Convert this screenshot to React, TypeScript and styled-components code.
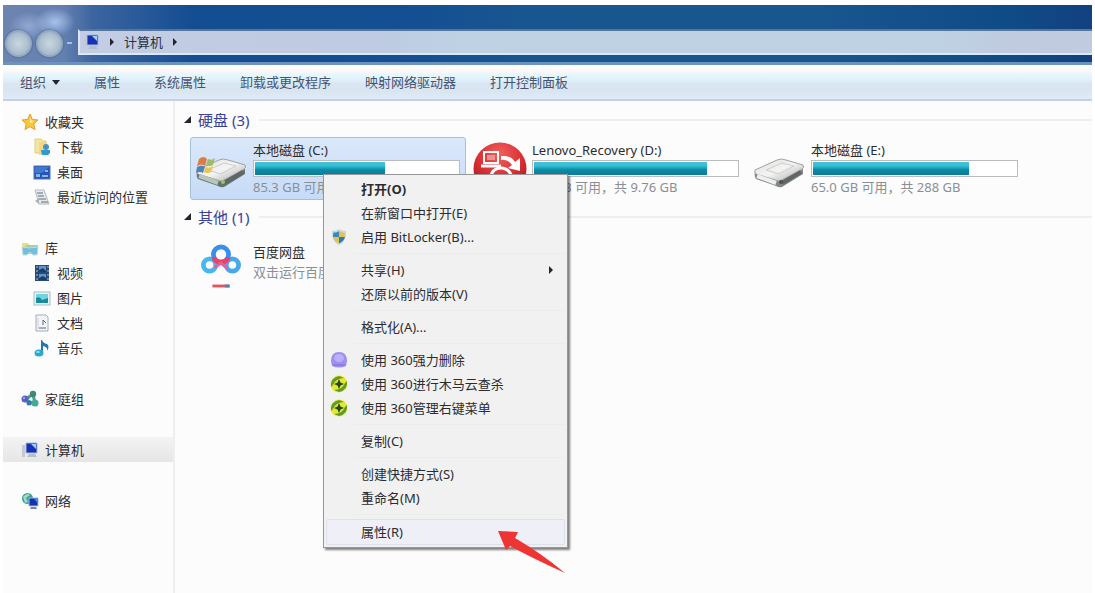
import React from "react";
import styled, { createGlobalStyle } from "styled-components";

const Global = createGlobalStyle`
  * { box-sizing: border-box; }
  body {
    margin: 0;
    background: #fff;
    color: #2c2c30;
    font: 13px/20px "Noto Sans", "Noto Sans CJK SC", sans-serif;
  }
  button, input { font: inherit; color: inherit; }
  ul, h2, p { margin: 0; padding: 0; list-style: none; font: inherit; }
`;

const Window = styled.div`
  position: relative;
  display: flex;
  flex-direction: column;
  min-height: 100vh;
  padding: 5px 3px 0;
  overflow: hidden;
`;

const TitleBar = styled.header`
  display: flex;
  align-items: flex-end;
  height: 60px;
  padding-bottom: 7px;
  border-bottom: 3px solid #6d92bd;
  background:
    radial-gradient(ellipse 20px 14px at 52px 17px, rgba(190, 215, 255, 0.75), transparent),
    radial-gradient(ellipse 20px 14px at 26px 21px, rgba(180, 200, 240, 0.55), transparent),
    linear-gradient(90deg, #6e84b0 0, #6480b0 60px, #3c65a0 90px, rgba(24, 79, 144, 0) 190px),
    linear-gradient(90deg, #134c90 0, #134f92 400px, #18568f 520px, #18568e 75%, #0f4c86 92%, #12417f);
`;

const NavButtons = styled.div`
  display: flex;
  align-items: center;
  width: 75px;
  height: 24px;
  padding-left: 2px;
  gap: 4px;
`;

const RoundButton = styled.button`
  width: 27px;
  height: 27px;
  padding: 0;
  border: 2px solid #93a9bf;
  border-radius: 50%;
  background: radial-gradient(circle at 50% 50%, #c9d8de 0, #aec0d0 55%, #8ea6c2 100%);
  box-shadow: 0 0 2px #35507c;
`;

const HistoryMark = styled.span`
  width: 5px;
  height: 2px;
  background: #a9bfdf;
`;

const AddressBar = styled.nav`
  display: flex;
  flex: 1;
  align-items: center;
  height: 26px;
  padding-left: 2px;
  gap: 8px;
  border-top: 2px solid #587699;
  border-bottom: 2px solid #dbe8f5;
  border-left: 2px solid #dbe4f0;
  background: linear-gradient(90deg, #c3cde3 0, #bfcbe2 300px, #bed2e4 380px, #bed2e3 85%, #c0cbe0 92%);
`;

const Crumb = styled.a`
  color: #2b3444;
  text-decoration: none;
`;

const Toolbar = styled.div`
  display: flex;
  height: 36px;
  padding: 0 17px;
  gap: 34px;
  border-bottom: 2px solid #c3d1e1;
  background: linear-gradient(#fff 0, #fdf7f8 6px, #e4f6fe 10px, #e1f2fc 14px, #d9e6f1 19px, #d9e6f1 26px, #dfebf7);
`;

const ToolButton = styled.button`
  display: flex;
  align-items: center;
  padding: 0;
  gap: 6px;
  border: 0;
  background: none;
  color: #46536f;
`;

const Panes = styled.div`
  display: flex;
  flex: 1;
  background: #fcfcfd;
`;

const Sidebar = styled.nav`
  display: flex;
  flex-direction: column;
  flex: none;
  width: 172px;
  padding-top: 8px;
  gap: 26px;
  border-right: 2px solid #eeeef1;
`;

const SideLink = styled.a<{ $nested?: boolean; $selected?: boolean }>`
  display: flex;
  align-items: center;
  height: 25px;
  padding-left: ${(p) => (p.$nested ? 30 : 18)}px;
  gap: 6px;
  color: inherit;
  text-decoration: none;
  background: ${(p) => (p.$selected ? "linear-gradient(#f3f3f3, #e6e6e7)" : "none")};
`;

const Content = styled.main`
  flex: 1;
  min-width: 0;
  padding: 6px 0 0 9px;
`;

const Section = styled.section`
  margin-bottom: 4px;
`;

const SectionTitle = styled.h2`
  display: flex;
  align-items: center;
  height: 26px;
  margin-bottom: 4px;
  gap: 6px;
  font-size: 15px;
  color: #38429a;

  &::after {
    content: "";
    flex: 1;
    height: 2px;
    margin-left: 4px;
    background: #efeff2;
  }
`;

const Tiles = styled.div`
  display: grid;
  grid-template-columns: repeat(auto-fill, 276px);
  gap: 3px;
  padding-left: 6px;
`;

const Tile = styled.div<{ $selected?: boolean }>`
  display: grid;
  grid-template-columns: 50px 1fr;
  align-items: center;
  height: 63px;
  padding: 0 5px;
  column-gap: 7px;
  border: 1px solid ${(p) => (p.$selected ? "#a5bfdf" : "transparent")};
  border-radius: 3px;
  background: ${(p) => (p.$selected ? "linear-gradient(#dbe8fb, #c6dbf7)" : "none")};
`;

const TileIcon = styled.span`
  display: flex;
  justify-content: center;

  svg { flex: none; }
`;

const TileText = styled.div<{ $raised?: boolean }>`
  min-width: 0;
  padding-bottom: ${(p) => (p.$raised ? 8 : 0)}px;
  white-space: nowrap;
`;

const Muted = styled.p`
  color: #8a8f96;
`;

const Meter = styled.div`
  height: 17px;
  padding: 1px;
  border: 1px solid #bcbcc0;
  background: #fff;
`;

const MeterFill = styled.div`
  height: 100%;
  background: linear-gradient(#45c3d8 0, #35bdd3 30%, #0a8aa6 60%, #0d7b99 100%);
`;

const Menu = styled.div`
  position: absolute;
  left: 323px;
  top: 174px;
  width: 245px;
  padding: 2px;
  border: 1px solid #979797;
  background: #f1f1f1;
  box-shadow: 2px 2px 2px rgba(0, 0, 0, 0.5);
`;

const MenuItem = styled.button<{ $default?: boolean; $hot?: boolean }>`
  display: flex;
  align-items: center;
  width: 100%;
  height: ${(p) => (p.$hot ? 26 : 24)}px;
  padding: 0 9px 0 3px;
  border: 1px solid ${(p) => (p.$hot ? "#dde1ec" : "transparent")};
  border-radius: 2px;
  background: ${(p) => (p.$hot ? "#eff0f7" : "none")};
  font-weight: ${(p) => (p.$default ? 700 : 400)};
  white-space: nowrap;
`;

const MenuIcon = styled.span`
  display: flex;
  flex: none;
  width: 31px;
`;

const MenuLabel = styled.span`
  flex: 1;
  text-align: left;
`;

const Separator = styled.hr`
  height: 1px;
  margin: 4px 0 4px 28px;
  border: 0;
  background: #ececee;
`;

const Pointer = styled.svg`
  position: absolute;
  left: 496px;
  top: 528px;
`;

const Svg = ({ children }: { children: React.ReactNode }) => (
  <svg width="18" height="18" viewBox="0 0 18 18" aria-hidden="true">
    {children}
  </svg>
);

const Triangle = ({ kind }: { kind: "right" | "down" | "open" }) => (
  <svg width="8" height="8" viewBox="0 0 8 8" aria-hidden="true">
    <path
      fill="#22252d"
      d={kind === "right" ? "M2 0 6 4 2 8Z" : kind === "down" ? "M0 2H8L4 7Z" : "M7 0V7H0Z"}
    />
  </svg>
);

const Star = () => (
  <Svg>
    <path d="M9 1 11.3 6.4 17 7 12.8 10.8 14 16.6 9 13.7 4 16.6 5.2 10.8 1 7 6.7 6.4Z" fill="#f8c83c" stroke="#e89a35" />
    <path d="M9 3.5 10.3 7.6 13 8 9 10Z" fill="#fff0a0" />
  </Svg>
);
const Downloads = () => (
  <Svg>
    <path d="M2 1H8L10 3H13V15H2Z" fill="#f5e4a0" stroke="#dfcc83" />
    <path d="M6 4H14V16L6 17Z" fill="#efd88a" />
    <circle cx="13" cy="9" r="3" fill="#4b91be" />
    <path d="M8 12H17V15L15 17H9Z" fill="#2d9ad0" />
  </Svg>
);
const Desktop = () => (
  <Svg>
    <rect x="1" y="3" width="16" height="13" fill="#2455b4" stroke="#5075b5" />
    <path d="M2 4H16L9 10H2Z" fill="#3e78d2" />
    <path d="M3 11H7V14H3ZM12 7H15V9H12ZM9 12H15V14H9Z" fill="#87b6e6" />
  </Svg>
);
const Recent = () => (
  <Svg>
    <path d="M2 2H11L16 16H6Z" fill="#e7eaec" stroke="#b3babf" />
    <path d="M4 5H10M5 8H11M6 11H13M8 14H15" stroke="#8b989e" strokeWidth="1.3" />
    <path d="M2 13 6 10V16Z" fill="#aab3ba" />
  </Svg>
);
const Library = () => (
  <Svg>
    <path d="M1 4H7L9 6H16V14H1Z" fill="#eadf8c" />
    <path d="M4 6H17V15H6Z" fill="#9dd6a2" />
    <path d="M1 8Q8 10 17 8L16 16H12Q9 11 6 16H2Z" fill="#74bddc" stroke="#bcdce8" />
  </Svg>
);
const Video = () => (
  <Svg>
    <rect x="2" y="1" width="14" height="16" fill="#274b78" />
    <path d="M6 2H13V8H6ZM6 10H13V16H6Z" fill="#6795c2" />
    <path d="M4 2V17M15 2V17" stroke="#aac1d9" strokeDasharray="2 2" />
    <path d="M6 6 10 4 13 7V8H6ZM6 14 10 12 13 14V16H6Z" fill="#1f3c63" />
  </Svg>
);
const Picture = () => (
  <Svg>
    <rect x="1" y="3" width="16" height="13" fill="#e7f3f7" stroke="#a3bdca" />
    <rect x="3" y="5" width="12" height="9" fill="#6fd5df" />
    <path d="M3 9Q7 7 9 11L15 9V14H3Z" fill="#168b9b" />
  </Svg>
);
const DocumentIcon = () => (
  <Svg>
    <path d="M3 1H13L15 3V17H3Z" fill="#f2f4fa" stroke="#a5abb6" />
    <path d="M10 6V11M10 6 13 9M6 14H13" stroke="#58687c" fill="none" />
    <path d="M5 4V15" stroke="#cbd0dc" />
  </Svg>
);
const Music = () => (
  <Svg>
    <path d="M9 1Q10 4 14 5Q17 7 14 12Q15 8 10 7V14H8V1Z" fill="#2677ae" />
    <ellipse cx="6" cy="14" rx="4.5" ry="3.5" fill="#2ca9ce" />
    <ellipse cx="5" cy="13" rx="2" ry="1" fill="#8ee4ee" />
  </Svg>
);
const Homegroup = () => (
  <Svg>
    <path d="M4 10 12 4 14 14Z" fill="none" stroke="#4c9b91" strokeWidth="3" />
    <circle cx="4" cy="9" r="3.5" fill="#5a60c8" />
    <circle cx="12" cy="4" r="3.2" fill="#3c8b75" />
    <circle cx="14" cy="13" r="3.5" fill="#47a997" />
    <circle cx="8" cy="13" r="2.5" fill="#2e7baf" />
    <circle cx="3" cy="8" r="1" fill="#c4b7f6" />
  </Svg>
);
const Computer = () => (
  <Svg>
    <path d="M1 4H4V16H1Z" fill="#c3cad3" />
    <path d="M5 2H16V12H5Z" fill="#1730b4" stroke="#a2b8dc" />
    <path d="M10 3H15V8Z" fill="#a2cdf5" />
    <path d="M8 13H14L16 16H6Z" fill="#b5bfca" />
  </Svg>
);
const Network = () => (
  <Svg>
    <circle cx="6.5" cy="6.5" r="5.5" fill="#3b9e95" />
    <path d="M2 5Q6 0 9 3L5 6L7 10L4 11Z" fill="#9edbc2" />
    <path d="M8 6H17V14H8Z" fill="#1533aa" stroke="#9ebce8" />
    <path d="M13 6.5H16.5V11Z" fill="#468ee2" />
    <path d="M10 15H15L16 17H9Z" fill="#7985a0" />
  </Svg>
);
const Shield = () => (
  <Svg>
    <path d="M9 1Q12 3 16 3Q17 13 9 17Q1 13 2 3Q6 3 9 1Z" fill="#c6d8e2" />
    <path d="M9 3V9H3Q3 6 3.5 4.5Q7 5 9 3Z" fill="#3a89bc" />
    <path d="M9 3Q11 5 14.5 4.5Q15 7 14.7 9H9ZM3 9H9V15.5Q4 13 3 9Z" fill="#e3c153" />
    <path d="M9 9H15Q14 13 9 15.5Z" fill="#3479ae" />
  </Svg>
);
const Purple = () => (
  <Svg>
    <path d="M1 10Q1 1 9 1T17 10L16 15Q9 18 2 15Z" fill="#9e8ff0" />
    <ellipse cx="9" cy="7" rx="5" ry="4" fill="#bbb0f8" />
    <path d="M3 14H15" stroke="#7d70d4" />
  </Svg>
);
const Safe360 = () => (
  <Svg>
    <circle cx="9" cy="9" r="8.5" fill="#e5e832" />
    <path d="M1 12Q0 3 9 1L14 3Q6 3 3 10ZM17 6Q18 15 9 17L4 15Q12 15 15 8Z" fill="#5f9a2a" />
    <path d="M9 4 10.5 7.5 14 9 10.5 10.5 9 14 7.5 10.5 4 9 7.5 7.5Z" fill="#26491c" />
  </Svg>
);

const DriveIcon = ({ system }: { system?: boolean }) => (
  <svg width="50" height="40" viewBox="0 -6 50 40" aria-hidden="true">
    <defs>
      <linearGradient id="metal" x1="0" y1="0" x2="1" y2="1">
        <stop offset="0" stopColor="#dcdddc" />
        <stop offset="0.5" stopColor="#f4f4f3" />
        <stop offset="1" stopColor="#a5a7a6" />
      </linearGradient>
    </defs>
    <path d="M1 17 27 25 49 14V19L28 32Q25 33 22 31L2 24Q0 22 1 17Z" fill={system ? "#62766e" : "#858787"} />
    <path d="M1 15 23 5Q27 3 32 5L49 10Q51 12 48 14L28 25Q25 27 21 25L2 19Q0 17 1 15Z" fill="url(#metal)" stroke="#a0a3a2" />
    <path d="M3 21 22 28" stroke={system ? "#b9c6be" : "#eef0ef"} strokeWidth="4" />
    <path d="M28 28 47 17" stroke="#606664" strokeWidth="4" />
    <path d="M12 15 28 8 40 11 25 19Z" fill="none" stroke="#cccecd" />
    <circle cx="27" cy="27" r="2" fill={system ? "#9bc45e" : "#505252"} />
    {system && (
      <>
        <path d="M3 4Q8 0 11 4L9 11Q6 8 1 11Z" fill="#db7c43" />
        <path d="M12 4Q16 6 19 3L17 10Q13 12 10 10Z" fill="#a0b96c" />
        <path d="M1 12Q6 9 9 12L7 18Q4 16 0 18Z" fill="#5582b5" />
        <path d="M10 12Q13 14 17 11L15 17Q11 19 8 17Z" fill="#e8c54b" />
      </>
    )}
  </svg>
);
const RecoveryIcon = () => (
  <svg width="54" height="54" viewBox="0 0 54 54" aria-hidden="true">
    <defs>
      <radialGradient id="redBall" cx="50%" cy="22%" r="75%">
        <stop offset="0" stopColor="#f0605a" />
        <stop offset="0.6" stopColor="#d92b32" />
        <stop offset="1" stopColor="#981b26" />
      </radialGradient>
    </defs>
    <circle cx="27" cy="27" r="26.5" fill="url(#redBall)" />
    <rect x="11" y="10" width="14" height="11" fill="none" stroke="#fff" strokeWidth="2" />
    <rect x="14" y="13" width="8" height="5" fill="#ee9191" />
    <path d="M8 24H28" stroke="#fff" strokeWidth="3" />
    <path d="M28 14Q38 13 42 20L47 16V29L35 26L39 23Q35 17 28 18Z" fill="#fff" />
    <path d="M16 40Q18 26 28 26T40 40" fill="none" stroke="#fff" strokeWidth="3" />
    <circle cx="28" cy="36" r="4" fill="#fff" />
  </svg>
);
const NetdiskIcon = () => (
  <svg width="40" height="46" viewBox="0 0 42 46" aria-hidden="true">
    <g fill="none" strokeWidth="5">
      <circle cx="9" cy="22" r="6.5" stroke="#45b8ed" />
      <circle cx="33" cy="22" r="6.5" stroke="#45a9ec" />
      <circle cx="21" cy="11" r="8" stroke="#398fe9" />
      <path d="M13.5 14Q15 19 21 19T28.5 14" stroke="#ed416b" />
      <path d="M14 25 21 20 28 26" stroke="#e95f93" strokeWidth="3" />
    </g>
    <path d="M12 44H30" stroke="#e4565c" strokeWidth="3" />
    <path d="M25 44H30" stroke="#4e82b8" strokeWidth="3" />
  </svg>
);

const toolbar = ["组织", "属性", "系统属性", "卸载或更改程序", "映射网络驱动器", "打开控制面板"];

const sideGroups = [
  [
    { label: "收藏夹", Icon: Star },
    { label: "下载", Icon: Downloads, nested: true },
    { label: "桌面", Icon: Desktop, nested: true },
    { label: "最近访问的位置", Icon: Recent, nested: true },
  ],
  [
    { label: "库", Icon: Library },
    { label: "视频", Icon: Video, nested: true },
    { label: "图片", Icon: Picture, nested: true },
    { label: "文档", Icon: DocumentIcon, nested: true },
    { label: "音乐", Icon: Music, nested: true },
  ],
  [{ label: "家庭组", Icon: Homegroup }],
  [{ label: "计算机", Icon: Computer, selected: true }],
  [{ label: "网络", Icon: Network }],
] as { label: string; Icon: React.FC; nested?: boolean; selected?: boolean }[][];

const drives = [
  { name: "本地磁盘 (C:)", used: 64, info: "85.3 GB 可用", icon: <DriveIcon system />, selected: true },
  { name: "Lenovo_Recovery (D:)", used: 85, info: "1.4 GB 可用，共 9.76 GB", icon: <RecoveryIcon /> },
  { name: "本地磁盘 (E:)", used: 77, info: "65.0 GB 可用，共 288 GB", icon: <DriveIcon /> },
];

type Entry = { label: string; icon?: React.ReactNode; bold?: boolean; sub?: boolean; hot?: boolean };
const menuGroups: Entry[][] = [
  [{ label: "打开(O)", bold: true }, { label: "在新窗口中打开(E)" }, { label: "启用 BitLocker(B)...", icon: <Shield /> }],
  [{ label: "共享(H)", sub: true }, { label: "还原以前的版本(V)" }],
  [{ label: "格式化(A)..." }],
  [
    { label: "使用 360强力删除", icon: <Purple /> },
    { label: "使用 360进行木马云查杀", icon: <Safe360 /> },
    { label: "使用 360管理右键菜单", icon: <Safe360 /> },
  ],
  [{ label: "复制(C)" }],
  [{ label: "创建快捷方式(S)" }, { label: "重命名(M)" }],
  [{ label: "属性(R)", hot: true }],
];

export default function App() {
  return (
    <Window>
      <Global />
      <TitleBar>
        <NavButtons>
          <RoundButton aria-label="后退" />
          <RoundButton aria-label="前进" />
          <HistoryMark />
        </NavButtons>
        <AddressBar aria-label="地址">
          <Computer />
          <Triangle kind="right" />
          <Crumb href="#computer">计算机</Crumb>
          <Triangle kind="right" />
        </AddressBar>
      </TitleBar>
      <Toolbar>
        {toolbar.map((label, i) => (
          <ToolButton key={label}>
            {label}
            {i === 0 && <Triangle kind="down" />}
          </ToolButton>
        ))}
      </Toolbar>
      <Panes>
        <Sidebar>
          {sideGroups.map((group) => (
            <ul key={group[0].label}>
              {group.map(({ label, Icon, nested, selected }) => (
                <li key={label}>
                  <SideLink href="#" $nested={nested} $selected={selected}>
                    <Icon />
                    {label}
                  </SideLink>
                </li>
              ))}
            </ul>
          ))}
        </Sidebar>
        <Content>
          <Section>
            <SectionTitle>
              <Triangle kind="open" />
              硬盘 (3)
            </SectionTitle>
            <Tiles>
              {drives.map((d) => (
                <Tile key={d.name} $selected={d.selected}>
                  <TileIcon>{d.icon}</TileIcon>
                  <TileText>
                    <p>{d.name}</p>
                    <Meter role="meter" aria-label={d.name} aria-valuenow={d.used} aria-valuemin={0} aria-valuemax={100}>
                      <MeterFill style={{ width: `${d.used}%` }} />
                    </Meter>
                    <Muted>{d.info}</Muted>
                  </TileText>
                </Tile>
              ))}
            </Tiles>
          </Section>
          <Section>
            <SectionTitle>
              <Triangle kind="open" />
              其他 (1)
            </SectionTitle>
            <Tiles>
              <Tile>
                <TileIcon>
                  <NetdiskIcon />
                </TileIcon>
                <TileText $raised>
                  <p>百度网盘</p>
                  <Muted>双击运行百度网盘</Muted>
                </TileText>
              </Tile>
            </Tiles>
          </Section>
        </Content>
      </Panes>
      <Menu role="menu">
        {menuGroups.map((group, i) => (
          <React.Fragment key={group[0].label}>
            {i > 0 && <Separator />}
            {group.map((item) => (
              <MenuItem key={item.label} role="menuitem" $default={item.bold} $hot={item.hot}>
                <MenuIcon>{item.icon}</MenuIcon>
                <MenuLabel>{item.label}</MenuLabel>
                {item.sub && <Triangle kind="right" />}
              </MenuItem>
            ))}
          </React.Fragment>
        ))}
      </Menu>
      <Pointer width="72" height="48" viewBox="0 0 72 48" aria-hidden="true">
        <path d="M2 3 22 4 19 10Q45 25 69 45Q38 31 14 18L10 22Z" fill="#ee3533" />
      </Pointer>
    </Window>
  );
}
